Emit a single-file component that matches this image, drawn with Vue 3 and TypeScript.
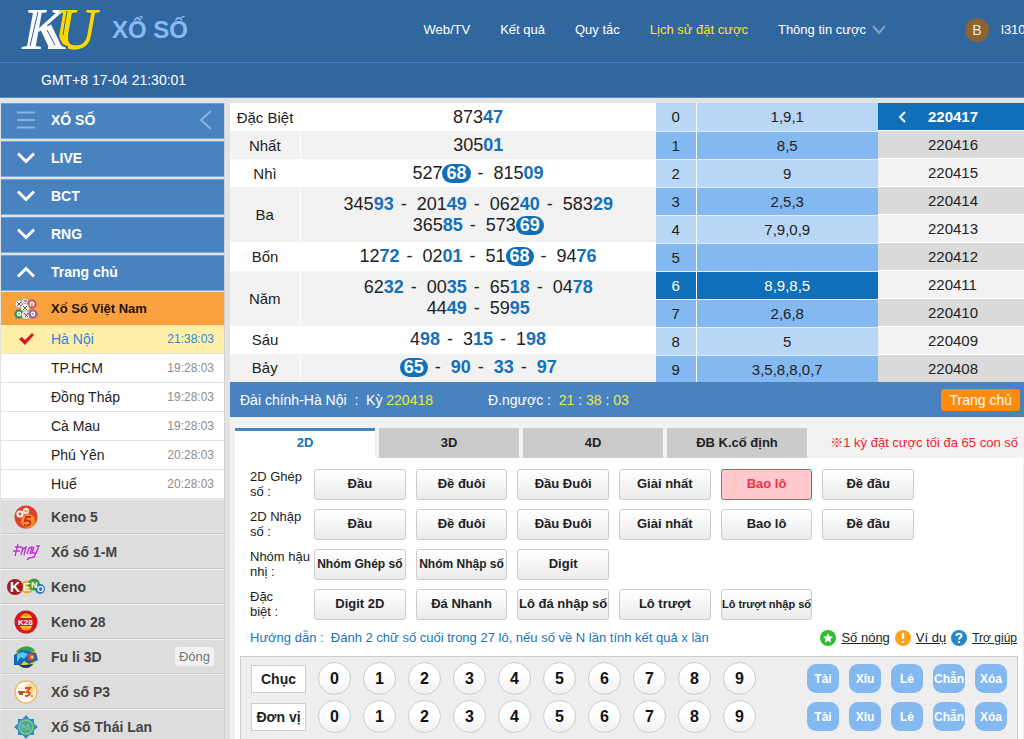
<script setup lang="ts">
import { ref } from 'vue'

interface Draw {
  prize: string
  lines: string[][]
}

const navLinks = ['Web/TV', 'Kết quả', 'Quy tắc', 'Lịch sử đặt cược']
const groups = ['LIVE', 'BCT', 'RNG', 'Trang chủ']

const cities = [
  { name: 'Hà Nội', time: '21:38:03' },
  { name: 'TP.HCM', time: '19:28:03' },
  { name: 'Đồng Tháp', time: '19:28:03' },
  { name: 'Cà Mau', time: '19:28:03' },
  { name: 'Phú Yên', time: '20:28:03' },
  { name: 'Huế', time: '20:28:03' },
]

const games = [
  { id: 'keno5', name: 'Keno 5' },
  { id: 'onem', name: 'Xổ số 1-M' },
  { id: 'keno', name: 'Keno' },
  { id: 'keno28', name: 'Keno 28' },
  { id: 'fuli', name: 'Fu li 3D', closed: true },
  { id: 'p3', name: 'Xổ số P3' },
  { id: 'thai', name: 'Xổ Số Thái Lan' },
]

const draws: Draw[] = [
  { prize: 'Đặc Biệt', lines: [['87347']] },
  { prize: 'Nhất', lines: [['30501']] },
  { prize: 'Nhì', lines: [['52768', '81509']] },
  { prize: 'Ba', lines: [['34593', '20149', '06240', '58329'], ['36585', '57369']] },
  { prize: 'Bốn', lines: [['1272', '0201', '5168', '9476']] },
  { prize: 'Năm', lines: [['6232', '0035', '6518', '0478'], ['4449', '5995']] },
  { prize: 'Sáu', lines: [['498', '315', '198']] },
  { prize: 'Bảy', lines: [['65', '90', '33', '97']] },
]
const isHot = (n: string) => ['65', '68', '69'].includes(n.slice(-2))

const tails = ['1,9,1', '8,5', '9', '2,5,3', '7,9,0,9', '', '8,9,8,5', '2,6,8', '5', '3,5,8,8,0,7']
const activeHead = 6

const periods = ['220417', '220416', '220415', '220414', '220413', '220412', '220411', '220410', '220409', '220408']
const activePeriod = ref('220417')

const tabs = ['2D', '3D', '4D', 'ĐB K.cố định']
const activeTab = ref('2D')

const common = ['Đầu', 'Đề đuôi', 'Đầu Đuôi', 'Giải nhất', 'Bao lô', 'Đề đầu']
const betRows = [
  { label: '2D Ghép\nsố :', options: common },
  { label: '2D Nhập\nsố :', options: common },
  { label: 'Nhóm hậu\nnhị :', options: ['Nhóm Ghép số', 'Nhóm Nhập số', 'Digit'] },
  { label: 'Đặc\nbiệt :', options: ['Digit 2D', 'Đá Nhanh', 'Lô đá nhập số', 'Lô trượt', 'Lô trượt nhập số'] },
]
const activeBet = ref('0-4')
const fit = (o: string) => (o.length > 14 ? 'long' : o.startsWith('Nhóm') ? 'wide' : '')

const places = ['Chục', 'Đơn vị']
const quick = ['Tài', 'Xỉu', 'Lẻ', 'Chẵn', 'Xóa']
</script>

<template>
  <div class="page">
    <header>
      <div class="topbar">
        <a href="#" class="brand">
          <svg class="logo" width="84" height="62" viewBox="0 0 84 62" aria-label="KU" role="img">
            <text y="50"><tspan x="4" fill="#fff">K</tspan><tspan x="36" fill="#ffd800">U</tspan></text>
            <path d="M25 30L34 25L44 46L49 48V51H30V48L34 46Z" fill="#fff" />
            <path d="M34 25L44 46L49 48V52" fill="none" stroke="#31679f" stroke-width="2" />
            <path d="M28 50h22v3H28z" fill="#31679f" />
            <path d="M20 13L12 47M29 31L37 46" stroke="#31679f" stroke-width="1" fill="none" />
            <path d="M49 12L45 36" stroke="#31679f" stroke-width="1" fill="none" />
          </svg>
          <span class="brand-name">XỔ SỐ</span>
        </a>
        <nav class="nav">
          <a v-for="(l, i) in navLinks" :key="l" href="#" :class="{ gold: i === 3 }">{{ l }}</a>
          <a href="#" class="drop">
            Thông tin cược
            <svg width="14" height="9" viewBox="0 0 14 9"><path d="M1 1l6 7 6-7" fill="none" stroke="#7ba3cd" stroke-width="2" /></svg>
          </a>
        </nav>
        <div class="user"><span class="avatar">B</span><span>l310</span></div>
      </div>
      <div class="clock">GMT+8 17-04 21:30:01</div>
    </header>

    <div class="columns">
      <aside class="sidebar">
        <button class="group head">
          <svg class="gicon" width="18" height="18" viewBox="0 0 18 18"><path d="M0 1.500h18M0 9h18M0 16.500h18" stroke="#8ab2dc" stroke-width="2" /></svg>
          <span>XỔ SỐ</span>
          <svg class="fold" width="12" height="20" viewBox="0 0 12 20"><path d="M11 1L1 10l10 9" fill="none" stroke="#86afd9" stroke-width="2" /></svg>
        </button>
        <button v-for="(g, i) in groups" :key="g" class="group" :class="{ open: i === 3 }">
          <svg class="gicon" width="18" height="12" viewBox="0 0 18 12">
            <path :d="i === 3 ? 'M1 10.500l8-8 8 8' : 'M1 1.500l8 8 8-8'" fill="none" stroke="#fff" stroke-width="3" />
          </svg>
          <span>{{ g }}</span>
        </button>

        <button class="vietnam">
          <svg class="ball" width="24" height="22" viewBox="0 0 24 22">
            <g stroke="#8b8580" stroke-width=".6">
              <circle cx="5" cy="6" r="4" fill="#f1efe9" /><circle cx="11" cy="4" r="4" fill="#ddd9d3" />
              <circle cx="18" cy="6" r="4.500" fill="#ef4f40" /><circle cx="11" cy="10" r="4.500" fill="#f5f4ef" />
              <circle cx="5" cy="16" r="4.500" fill="#289147" /><circle cx="12" cy="17" r="4.500" fill="#e9e7e1" />
              <circle cx="19" cy="16" r="4.500" fill="#ad5da4" />
            </g>
            <g fill="#fff"><circle cx="18" cy="6" r="2.400" /><circle cx="5" cy="16" r="2.400" /><circle cx="19" cy="16" r="2.400" /></g>
            <path d="M3 4l4 4M7 4L3 8M9 8l4 4M13 8l-4 4M10 3h3M10 15l4 4M14 15l-3 4M18 5v3M4 16h2M18 16h2" stroke="#625b58" />
          </svg>
          <span>Xổ Số Việt Nam</span>
        </button>

        <ul class="cities">
          <li v-for="(c, i) in cities" :key="c.name">
            <a href="#" :class="{ chosen: i === 0 }">
              <svg v-if="i === 0" class="tick" width="15" height="12" viewBox="0 0 15 12"><path d="M0 6l3-2 3 3 7-7 2 2-9 10z" fill="#d51920" /></svg>
              <span>{{ c.name }}</span><time>{{ c.time }}</time>
            </a>
          </li>
        </ul>

        <ul class="games">
          <li v-for="g in games" :key="g.id">
            <a href="#">
              <span class="game-icon">
                <svg v-if="g.id === 'keno5'" width="24" height="24" viewBox="0 0 24 24">
                  <circle cx="12" cy="12" r="11.500" fill="#d9442a" />
                  <circle cx="6" cy="9" r="3.600" fill="#fff" /><circle cx="12" cy="6" r="3.200" fill="#ffe3d0" />
                  <path d="M4 9h4M6 7v4M10.500 6h3" stroke="#d9442a" />
                  <circle cx="14" cy="16" r="7" fill="#f39422" />
                  <path d="M17 12h-5l-1 4c4-1 6 0 5 3-1 2-4 2-6 1" fill="none" stroke="#c92f1c" stroke-width="2" />
                </svg>
                <svg v-else-if="g.id === 'onem'" width="28" height="18" viewBox="0 0 28 18">
                  <path d="M6 1L3 13M3 4h7M1 8h7M11 4l-2 8M10 7l4-3-2 8M15 11l2-6 3-1-2 7M22 4l-2 6 4 0 3-7h-3M25 8l-3 6-5 1-2 2" fill="none" stroke="#f3e6f5" stroke-width="3" />
                  <path d="M6 1L3 13M3 4h7M1 8h7M11 4l-2 8M10 7l4-3-2 8M15 11l2-6 3-1-2 7M22 4l-2 6 4 0 3-7h-3M25 8l-3 6-5 1-2 2" fill="none" stroke="#bb32d0" stroke-width="1.500" />
                </svg>
                <svg v-else-if="g.id === 'keno'" width="38" height="18" viewBox="0 0 38 18">
                  <circle cx="20" cy="9" r="6.500" fill="#efa722" /><circle cx="27" cy="6.500" r="6" fill="#3c9a43" />
                  <circle cx="33" cy="11" r="5" fill="#2c79bc" /><circle cx="8" cy="9" r="8" fill="#a01d24" />
                  <g class="kb" fill="#fff"><text x="3" y="14" font-size="14">K</text><text x="16" y="13" font-size="11">E</text><text x="24" y="10" font-size="9">N</text><text x="30" y="14" font-size="9">O</text></g>
                </svg>
                <svg v-else-if="g.id === 'keno28'" width="24" height="24" viewBox="0 0 24 24">
                  <circle cx="12" cy="12" r="11.500" fill="#cf1b20" /><path d="M6 8c2-6 10-6 12 0zM6 16h12c-2 6-10 6-12 0z" fill="#f7c51d" />
                  <path d="M8 5h8M8 19h8M12 3v4M12 17v4" stroke="#db7c17" stroke-width=".8" />
                  <text x="4" y="15" font-size="8" class="kb" fill="#fff">K28</text>
                </svg>
                <svg v-else-if="g.id === 'fuli'" width="24" height="24" viewBox="0 0 24 24">
                  <circle cx="12" cy="12" r="11" fill="#f1d321" /><path d="M2 7C6 1 17-1 21 6L11 8z" fill="#2fa15e" />
                  <path d="M0 10l8-5 14 3 2 7-9 4-5-3-3 4H0z" fill="#1566b7" /><path d="M3 9l6-2 5 2-4 5-3-2-4 5z" fill="#54c7f0" />
                  <circle cx="17" cy="12" r="3.500" fill="#e2432a" /><circle cx="18" cy="12" r="1.500" fill="#ffe26b" /><path d="M5 20c4 4 11 4 14-1l-8 1z" fill="#1b3666" />
                </svg>
                <svg v-else-if="g.id === 'p3'" width="24" height="24" viewBox="0 0 24 24">
                  <circle cx="12" cy="12" r="11" fill="#fffaf0" stroke="#f1b871" stroke-width="1.500" />
                  <circle cx="16" cy="9" r="5" fill="#fad98e" /><path d="M4 12h7M5 14h4" stroke="#b8532b" stroke-width="2" />
                  <path d="M11 8h5l-3 4c4 0 4 4-2 4" fill="none" stroke="#e24a1c" stroke-width="2" /><circle cx="18" cy="16" r="1.500" fill="#f5a429" />
                </svg>
                <svg v-else width="24" height="24" viewBox="0 0 24 24">
                  <path d="M12 0l3.500 4H20v4.500l4 3.500-4 3.500V20h-4.500L12 24l-3.500-4H4v-4.500L0 12l4-3.500V4h4.500z" fill="#2a8fcb" />
                  <circle cx="12" cy="12" r="7" fill="#49a8a7" stroke="#8acb77" stroke-width="1.500" />
                  <path d="M8 15V9l3 3-3 1M12 15l2-6 2 6M9 10l6 5" fill="none" stroke="#89cb70" />
                </svg>
              </span>
              <span>{{ g.name }}</span><em v-if="g.closed">Đóng</em>
            </a>
          </li>
        </ul>
      </aside>

      <main>
        <section class="results">
          <table class="draws">
            <tbody>
              <tr v-for="d in draws" :key="d.prize">
                <th scope="row">{{ d.prize }}</th>
                <td>
                  <div v-for="(line, li) in d.lines" :key="li" class="line">
                    <template v-for="(n, ni) in line" :key="n"><i v-if="ni">-</i><span>{{ n.slice(0, -2) }}<b :class="{ hot: isHot(n) }">{{ n.slice(-2) }}</b></span></template>
                  </div>
                </td>
              </tr>
            </tbody>
          </table>
          <table class="heads">
            <tbody>
              <tr v-for="(t, i) in tails" :key="i" :class="{ on: i === activeHead }">
                <th scope="row">{{ i }}</th><td>{{ t }}</td>
              </tr>
            </tbody>
          </table>
          <div class="periods">
            <button v-for="p in periods" :key="p" :class="{ on: p === activePeriod }" @click="activePeriod = p">
              <svg v-if="p === activePeriod" width="8" height="12" viewBox="0 0 8 12"><path d="M7 1L2 6l5 5" fill="none" stroke="#fff" stroke-width="2" /></svg>{{ p }}
            </button>
          </div>
        </section>

        <section class="status">
          <span>Đài chính-Hà Nội &nbsp;:&nbsp; Kỳ <b>220418</b></span>
          <span class="countdown">Đ.ngược : &nbsp;<b>21</b> : <b>38</b> : <b>03</b></span>
          <button>Trang chủ</button>
        </section>

        <div class="tabs">
          <button v-for="t in tabs" :key="t" :class="{ on: t === activeTab }" @click="activeTab = t">{{ t }}</button>
          <p>※1 kỳ đặt cược tối đa 65 con số</p>
        </div>

        <section class="panel">
          <div v-for="(r, ri) in betRows" :key="r.label" class="bet-row">
            <span class="bet-label">{{ r.label }}</span>
            <div class="options">
              <button v-for="(o, oi) in r.options" :key="o" :class="[fit(o), { on: activeBet === `${ri}-${oi}` }]" @click="activeBet = `${ri}-${oi}`">{{ o }}</button>
            </div>
          </div>
          <div class="guide">
            <p>Hướng dẫn :&nbsp; Đánh 2 chữ số cuối trong 27 lô, nếu số về N lần tính kết quả x lần</p>
            <a href="#">
              <svg width="16" height="16" viewBox="0 0 16 16"><circle cx="8" cy="8" r="8" fill="#2fbd34" /><path d="M8 3l1.500 3.300 3.500.4-2.600 2.400.7 3.500L8 10.900l-3.100 1.700.7-3.500L3 6.700l3.500-.4z" fill="#fff" /></svg><span>Số nóng</span>
            </a>
            <a href="#">
              <svg width="16" height="16" viewBox="0 0 16 16"><circle cx="8" cy="8" r="8" fill="#faa21b" /><path d="M8 3v6M8 11v2" stroke="#fff" stroke-width="2.200" /></svg><span>Ví dụ</span>
            </a>
            <a href="#" class="help">
              <svg width="16" height="16" viewBox="0 0 16 16"><circle cx="8" cy="8" r="8" fill="#2589c9" /><path d="M5.500 6c0-3 5-3 5 0 0 1.800-2.500 1.500-2.500 3.500M8 11v2" fill="none" stroke="#fff" stroke-width="2" /></svg><span>Trợ giúp</span>
            </a>
          </div>

          <div class="picker">
            <div v-for="p in places" :key="p" class="pick-row">
              <span class="place">{{ p }}</span>
              <button v-for="n in 10" :key="n" class="num">{{ n - 1 }}</button>
              <div class="quick"><button v-for="q in quick" :key="q">{{ q }}</button></div>
            </div>
          </div>
        </section>
      </main>
    </div>
  </div>
</template>

<style>
body {
  margin: 0;
}
</style>

<style scoped>
* {
  box-sizing: border-box;
}
.page {
  height: 100vh;
  overflow: hidden;
  display: flex;
  flex-direction: column;
  background: #e3e3e3;
  color: #222;
  font-family: "Liberation Sans", Arial, "Noto Sans CJK JP", sans-serif;
  font-size: 14px;
}
button {
  font: inherit;
  color: inherit;
  border: 0;
  margin: 0;
  padding: 0;
  background: none;
  white-space: nowrap;
  cursor: pointer;
}
a {
  color: inherit;
  text-decoration: none;
}
ul {
  list-style: none;
  margin: 0;
  padding: 0;
}
p {
  margin: 0;
}
svg {
  display: block;
  flex: none;
}

/* header */
header {
  flex: none;
  background: #31679f;
  color: #fff;
  border-bottom: 1px solid #5c8cbf;
}
.topbar {
  display: flex;
  align-items: center;
  height: 63px;
  padding: 0 0 3px 18px;
  border-bottom: 1px solid #4a7fb9;
}
.brand {
  display: flex;
  align-items: center;
  gap: 10px;
}
.logo {
  overflow: visible;
}
.logo text {
  font-family: "Liberation Serif", serif;
  font-style: italic;
  font-weight: bold;
  font-size: 60px;
}
.brand-name {
  font-size: 24px;
  font-weight: bold;
  color: #86bbf5;
}
.nav {
  display: flex;
  gap: 30px;
  margin-left: auto;
  margin-right: 79px;
  font-size: 13px;
  white-space: nowrap;
}
.drop {
  display: flex;
  align-items: center;
  gap: 6px;
}
.gold {
  color: #ffe228;
}
.user {
  display: flex;
  align-items: center;
  gap: 12px;
  width: 59px;
  font-size: 13px;
}
.avatar {
  flex: none;
  width: 24px;
  height: 24px;
  border-radius: 50%;
  background: #8b6434;
  color: #f1e6d6;
  font-size: 14px;
  line-height: 24px;
  text-align: center;
}
.clock {
  height: 34px;
  line-height: 34px;
  padding-left: 41px;
}

.columns {
  flex: 1;
  min-height: 0;
  display: flex;
  gap: 5px;
  padding-top: 5px;
}

/* sidebar */
.sidebar {
  flex: none;
  width: 225px;
  padding-left: 1px;
  border-right: 1px solid #d2d2d2;
  font-weight: bold;
}
.group,
.vietnam {
  display: flex;
  align-items: center;
  width: 100%;
  padding: 0 12px 0 16px;
  text-align: left;
}
.group {
  height: 36px;
  margin-bottom: 2px;
  padding-bottom: 2px;
  background: #4983bf;
  border-top: 1px solid #6ba0dc;
  border-bottom: 1px solid #7eaede;
  color: #fff;
}
.group.open {
  margin-bottom: 1px;
}
.group span {
  margin-left: 16px;
}
.fold {
  margin-left: auto;
}
.vietnam {
  height: 33px;
  padding: 0 12px 0 13px;
  background: #f7a23e;
  color: #1d1108;
  font-size: 13px;
}
.vietnam span {
  margin-left: 13px;
}
.cities {
  font-weight: normal;
}
.cities a {
  display: flex;
  align-items: center;
  height: 29px;
  padding: 0 10px 1px 50px;
  background: #fff;
  border-bottom: 1px solid #e2e2e2;
}
.cities time {
  margin-left: auto;
  font-size: 12px;
  color: #8c8c8c;
}
.cities a.chosen {
  padding-left: 18px;
  background: #ffefa8;
}
.tick {
  margin-right: 17px;
}
.chosen,
.cities .chosen time {
  color: #2c86dd;
}
.games a {
  display: flex;
  align-items: center;
  height: 35px;
  padding-right: 10px;
  background: #ddd;
  border-top: 1px solid #f0f0f0;
  border-bottom: 1px solid #c8c8c8;
  color: #444;
}
.game-icon {
  display: flex;
  justify-content: center;
  width: 50px;
}
.kb {
  font-family: "Liberation Sans", sans-serif;
  font-weight: bold;
}
.games em {
  margin-left: auto;
  padding: 0 4px;
  line-height: 19px;
  border-radius: 3px;
  background: #f1f1f1;
  font-style: normal;
  font-weight: normal;
  font-size: 13px;
  color: #777;
}

/* results */
main {
  flex: 1;
  min-width: 0;
  display: flex;
  flex-direction: column;
  background: #f2f2f2;
}
.results {
  display: flex;
  height: 279px;
  overflow: hidden;
  flex: none;
  background: #fff;
}
table {
  border-collapse: collapse;
}
th,
td {
  padding: 0;
  font-weight: normal;
  text-align: center;
}
.draws {
  flex: 426 1 0;
  font-size: 15px;
}
.draws th {
  width: 70px;
}
.draws tr:nth-child(even) {
  background: #f2f2f2;
}
.draws tr:nth-child(even) th {
  border-right: 1px solid #fff;
}
.draws td {
  height: 28px;
  font-size: 18px;
  line-height: 21px;
}
.draws tr:nth-child(4) td,
.draws tr:nth-child(6) td {
  height: 55px;
}
.line {
  display: flex;
  justify-content: center;
}
.line i {
  padding: 0 10px 0 7px;
  font-style: normal;
}
.line b {
  color: #1470bb;
}
.line b.hot {
  display: inline-block;
  padding: 0 4px;
  line-height: 19px;
  border-radius: 10px;
  background: #116eb8;
  color: #fff;
}
.heads {
  flex: 222 1 0;
  font-size: 15px;
}
.heads tr {
  height: 28px;
  background: #b9d7f5;
  border-bottom: 1px solid #e3effb;
}
.heads tr:nth-child(even) {
  background: #84b8f0;
}
.heads tr.on {
  background: #116eb8;
  color: #fff;
}
.heads th {
  width: 40px;
  border-right: 1px solid #fff;
}
.periods {
  flex: 146 1 0;
  font-size: 15px;
}
.periods button {
  display: flex;
  align-items: center;
  width: 100%;
  height: 28px;
  padding-left: 50px;
  background: #f2f2f2;
  border-bottom: 1px solid #fff;
}
.periods button:nth-child(even) {
  background: #dadada;
}
.periods button.on {
  padding-left: 20px;
  gap: 22px;
  background: #116eb8;
  color: #fff;
  font-weight: bold;
}

.status {
  flex: none;
  display: flex;
  align-items: center;
  height: 35px;
  padding: 0 4px 0 10px;
  background: #4983bf;
  color: #fff;
}
.status b {
  font-weight: normal;
  color: #ece84a;
}
.countdown {
  margin-left: 55px;
}
.status button {
  height: 22px;
  margin-left: auto;
  padding: 0 8px;
  border-radius: 3px;
  background: #ff8a0c;
}

.tabs {
  flex: none;
  display: flex;
  gap: 4px;
  padding: 11px 6px 0 5px;
}
.tabs button {
  flex: none;
  width: 140px;
  height: 30px;
  padding-bottom: 2px;
  background: #cbcbcb;
  font-size: 13px;
  font-weight: bold;
}
.tabs button.on {
  padding-bottom: 5px;
  background: #fff;
  border-top: 3px solid #4983bf;
  color: #1470bb;
}
.tabs p {
  margin-left: auto;
  font-size: 13px;
  line-height: 30px;
  color: #f2222c;
  white-space: nowrap;
}

.panel {
  flex: 1;
  min-height: 0;
  display: flex;
  flex-direction: column;
  margin: 0 1px 0 5px;
  padding: 11px 5px 0;
  background: #fff;
}
.bet-row {
  flex: none;
  display: flex;
  height: 40px;
  padding-left: 10px;
}
.bet-label {
  flex: none;
  width: 64px;
  font-size: 13px;
  line-height: 15px;
  white-space: pre;
}
.options {
  display: grid;
  grid-template-columns: repeat(6, 1fr);
  gap: 10px;
  width: 600px;
}
.options button {
  display: flex;
  justify-content: center;
  align-items: center;
  min-width: 0;
  height: 31px;
  padding-bottom: 2px;
  border: 1px solid #ccc;
  border-radius: 3px;
  background: linear-gradient(#fff, #ebebeb);
  font-size: 13px;
  font-weight: bold;
}
.options button.wide {
  font-size: 12px;
}
.options button.long {
  font-size: 11px;
}
.options button.on {
  border-color: #ee4257;
  background: #ffc9ce;
  color: #ee3346;
}
.guide {
  flex: none;
  display: flex;
  align-items: center;
  height: 27px;
  padding: 0 1px 10px 10px;
  gap: 5px;
}
.guide p {
  margin-right: auto;
  font-size: 13px;
  color: #2173b8;
  white-space: nowrap;
}
.guide a {
  display: flex;
  align-items: center;
  gap: 5px;
  font-size: 13px;
  text-decoration: underline;
  white-space: nowrap;
}
.guide a.help {
  font-size: 12px;
}
.picker {
  flex: 1;
  display: flex;
  flex-direction: column;
  gap: 5px;
  padding: 5px 10px 0;
  border: 1px solid #ccc;
  border-bottom: 0;
  background: #eee;
}
.pick-row {
  display: flex;
  align-items: center;
  gap: 12px;
  height: 33px;
}
.place {
  width: 55px;
  line-height: 26px;
  border: 1px solid #ccc;
  background: #fff;
  text-align: center;
  font-weight: bold;
}
.num {
  width: 33px;
  height: 33px;
  border: 1px solid #ccc;
  border-radius: 50%;
  background: linear-gradient(#fff 40%, #f0f0f0);
  color: #111;
  font-size: 16px;
  font-weight: bold;
}
.quick {
  display: flex;
  gap: 10px;
  margin-left: auto;
}
.quick button {
  display: flex;
  justify-content: center;
  align-items: center;
  width: 32px;
  height: 29px;
  border-radius: 9px;
  background: #84b8f0;
  color: #fff;
  font-size: 12px;
  font-weight: bold;
}
</style>
